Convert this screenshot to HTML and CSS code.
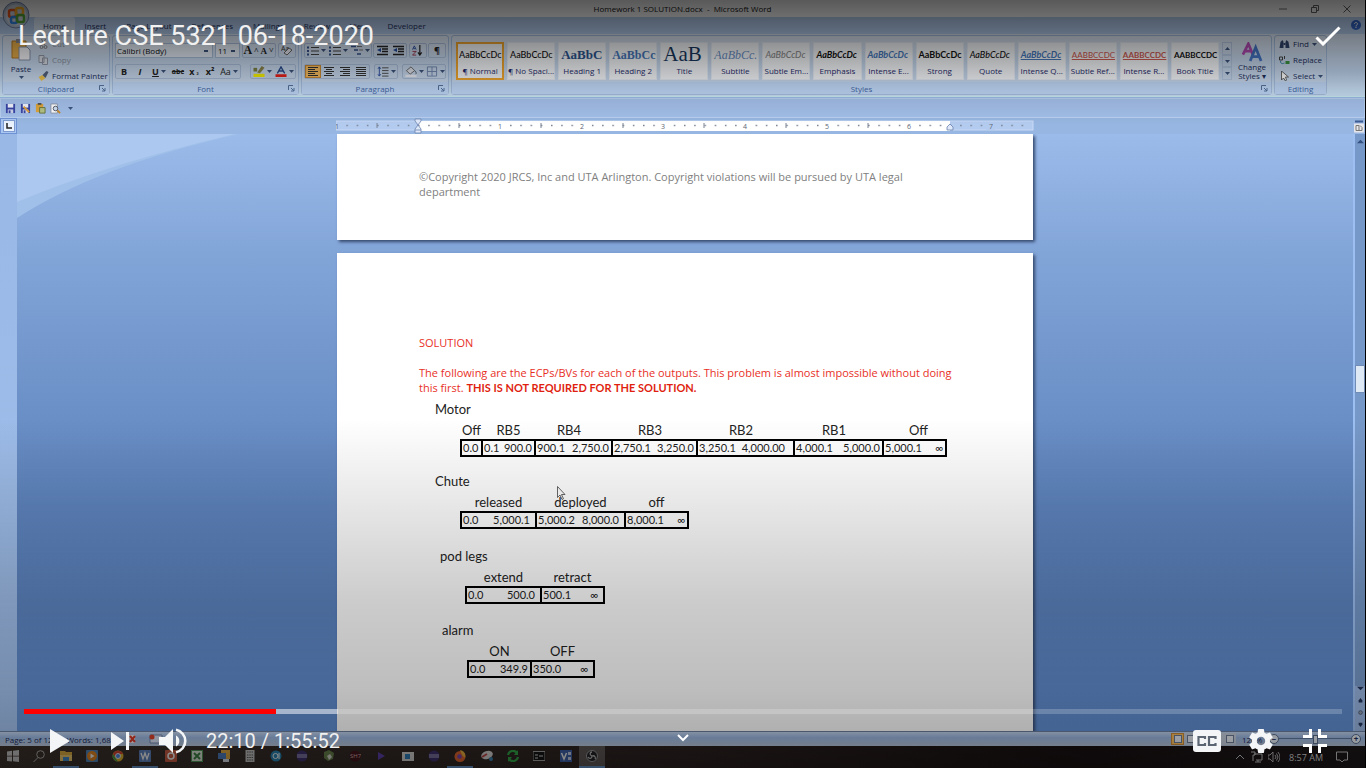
FILE: index.html
```html
<!DOCTYPE html>
<html lang="en">
<head>
<meta charset="utf-8">
<meta name="viewport" content="width=device-width, initial-scale=1">
<title>Lecture CSE 5321 06-18-2020</title>
<link rel="stylesheet" href="styles.css">
</head>
<body>
<svg class="defs" aria-hidden="true">
  <symbol id="down" viewBox="0 0 5 3"><path d="M0 0h5L2.500 3z" fill="#3d5680"/></symbol>
  <symbol id="launch" viewBox="0 0 7 7"><path d="M.5 5V.5H5M3 3l3 3M6 3v3H3" fill="none" stroke="#54729c"/></symbol>
  <symbol id="bullets" viewBox="0 0 12 10"><path d="M0 1h2v2H0zM0 4.500h2v2H0zM0 8h2v2H0z" fill="#35528b"/><path d="M4 2h8M4 5.500h8M4 9h8" stroke="#444"/></symbol>
  <symbol id="indent" viewBox="0 0 12 10"><path d="M1 1h11M6 3.500h6M6 6h6M1 9h11" stroke="#222" stroke-width="1.400"/><path d="M5 2.500v4L1 4.500z" fill="#234b9a"/></symbol>
  <symbol id="lines" viewBox="0 0 12 10"><path d="M1 1h10M1 3h7M1 5h10M1 7h7M1 9h10" stroke="#333" stroke-width="1.200"/></symbol>
  <symbol id="linesc" viewBox="0 0 12 10"><path d="M1 1h10M3 3h6M1 5h10M3 7h6M1 9h10" stroke="#333" stroke-width="1.200"/></symbol>
  <symbol id="linesr" viewBox="0 0 12 10"><path d="M1 1h10M4 3h7M1 5h10M4 7h7M1 9h10" stroke="#333" stroke-width="1.200"/></symbol>
  <symbol id="linesj" viewBox="0 0 12 10"><path d="M1 1h10M1 3h10M1 5h10M1 7h10M1 9h10" stroke="#333" stroke-width="1.200"/></symbol>
  <symbol id="save" viewBox="0 0 12 12"><path d="M1 1h10v10H1z" fill="#3a46a8"/><path d="M3 1h6v4H3z" fill="#f2f4ff"/><path d="M3 7h6v4H3z" fill="#cdd3ea"/><path d="M4 8h2v3H4z" fill="#3a46a8"/></symbol>
  <symbol id="eclipse" viewBox="0 0 12 12"><circle cx="6" cy="6" r="5.500" fill="#3b2f70"/><path d="M1 5h10M1 7h10" stroke="#b9b4d8" stroke-width="1.200"/></symbol>
</svg>

<div class="player">
  <div class="word">
    <header class="titlebar">
      <svg class="office" viewBox="0 0 28 28" aria-hidden="true"><circle cx="14" cy="14" r="13" fill="#b9c6da" stroke="#7084a8"/><circle cx="14" cy="14" r="10.500" fill="#d5deeb"/><rect x="7" y="9" width="7" height="7" rx="2" fill="none" stroke="#f05a1c" stroke-width="2.500"/><rect x="14" y="7" width="7" height="7" rx="2" fill="none" stroke="#ffb020" stroke-width="2.500"/><rect x="9" y="16" width="6" height="6" rx="2" fill="none" stroke="#3287e8" stroke-width="2.500"/><rect x="15" y="14" width="7" height="7" rx="2" fill="none" stroke="#55a637" stroke-width="2.500"/></svg>
      <span class="doc-name">Homework 1 SOLUTION.docx&nbsp; - &nbsp;Microsoft Word</span>
      <div class="window-buttons">
        <button aria-label="Minimize"><svg viewBox="0 0 8 8"><path d="M0 4h8" stroke="#777"/></svg></button>
        <button aria-label="Restore"><svg viewBox="0 0 8 8"><path d="M.5 2.500h5v5h-5zM2.500 2V.5h5v5H6" fill="none" stroke="#666"/></svg></button>
        <button aria-label="Close"><svg viewBox="0 0 8 8"><path d="M.5.5l7 7M7.500.5l-7 7" stroke="#666"/></svg></button>
      </div>
    </header>

    <nav class="tabs">
      <button class="tab tab-active">Home</button>
      <button class="tab">Insert</button>
      <button class="tab">Page Layout</button>
      <button class="tab">References</button>
      <button class="tab">Mailings</button>
      <button class="tab">Review</button>
      <button class="tab">View</button>
      <button class="tab">Developer</button>
      <svg class="help" viewBox="0 0 10 10" aria-hidden="true"><circle cx="5" cy="5" r="5" fill="#3467c8"/><path d="M3.500 4c0-2 3-2 3 0 0 1-1.500 1-1.500 2v.5M5 7v1" fill="none" stroke="#fff"/></svg>
    </nav>

    <div class="ribbon">
      <section class="group g-clip">
        <div class="group-body clip">
          <button class="paste"><svg viewBox="0 0 20 22"><path d="M1 2h14v17H1z" fill="#edb24b" stroke="#b97d22"/><path d="M5 0h6v4H5z" fill="#8a8a92"/><path d="M8 8h8l3 3v10H8z" fill="#fbfbff" stroke="#8694ad"/></svg>Paste<svg class="down"><use href="#down"/></svg></button>
          <div class="stack">
            <button class="off"><svg viewBox="0 0 10 10"><path d="M3 0l3 6M7 0L4 6" stroke="#888"/><circle cx="3" cy="8" r="1.500" fill="none" stroke="#888"/><circle cx="7" cy="8" r="1.500" fill="none" stroke="#888"/></svg>Cut</button>
            <button class="off"><svg viewBox="0 0 10 10"><path d="M.5.5h5v7h-5zM4 3h5v6.500H4z" fill="#dce0e8" stroke="#9199a8"/></svg>Copy</button>
            <button><svg viewBox="0 0 10 10"><path d="M0 6l4-2 3 3-4 3z" fill="#f1c54c"/><path d="M4 4l4-4 2 1-3 6z" fill="#53607c"/></svg>Format Painter</button>
          </div>
        </div>
        <h2>Clipboard<svg class="launch"><use href="#launch"/></svg></h2>
      </section>

      <section class="group g-font">
        <div class="group-body rows">
          <div class="row">
            <select class="font-name" aria-label="Font"><option>Calibri (Body)</option></select>
            <select class="font-size" aria-label="Font size"><option>11</option></select>
            <span class="box"><button class="t16 serif big" aria-label="Grow font">A<sup>˄</sup></button><button class="t16 serif" aria-label="Shrink font">A<sup>˅</sup></button></span>
            <span class="box"><button class="t16" aria-label="Clear formatting"><svg class="ic" viewBox="0 0 12 11"><text x="0" y="6" font-size="7" fill="#333">Aa</text><path d="M3 8l5-5 3 2-5 5z" fill="#e9eaf2" stroke="#666"/></svg></button></span>
          </div>
          <div class="row">
            <span class="box">
              <button class="t16 b">B</button><button class="t16 i">I</button><button class="t24 b"><u>U</u><svg class="down"><use href="#down"/></svg></button><button class="t16 strike">abc</button><button class="t16 b">x<sub>₂</sub></button><button class="t16 b">x²</button><button class="t24">Aa<svg class="down"><use href="#down"/></svg></button>
            </span>
            <span class="box"><button class="t24" aria-label="Highlight"><svg class="ic" viewBox="0 0 12 12"><path d="M0 8.500h12V12H0z" fill="#f5f000"/><path d="M4 7l5-7 3 2-5 6z" fill="#8a8448"/><path d="M0 2h4v4H0z" fill="#7c8040"/></svg><svg class="down"><use href="#down"/></svg></button><button class="t24" aria-label="Font color"><svg class="ic" viewBox="0 0 12 12"><path d="M0 9h12v3H0z" fill="#e8201a"/><path d="M2 8l4-7 4 7M4 5.500h4" fill="none" stroke="#274a8c" stroke-width="1.500"/></svg><svg class="down"><use href="#down"/></svg></button></span>
          </div>
        </div>
        <h2>Font<svg class="launch"><use href="#launch"/></svg></h2>
      </section>

      <section class="group g-para">
        <div class="group-body rows">
          <div class="row">
            <span class="box"><button class="t24" aria-label="Bullets"><svg class="ic"><use href="#bullets"/></svg><svg class="down"><use href="#down"/></svg></button><button class="t24" aria-label="Numbering"><svg class="ic"><use href="#bullets"/></svg><svg class="down"><use href="#down"/></svg></button><button class="t24" aria-label="Multilevel list"><svg class="ic" viewBox="0 0 12 10"><path d="M0 1h5M3 4.500h4M6 8.500h4" stroke="#35528b" stroke-width="1.500"/><path d="M6 1h5M8 4.500h4" stroke="#777"/></svg><svg class="down"><use href="#down"/></svg></button></span>
            <span class="box"><button class="t16" aria-label="Decrease indent"><svg class="ic"><use href="#indent"/></svg></button><button class="t16" aria-label="Increase indent"><svg class="ic"><use href="#indent"/></svg></button></span>
            <span class="box"><button class="t16" aria-label="Sort"><svg class="ic" viewBox="0 0 12 12"><path d="M0 5l2-4 2 4M1 4h2" fill="none" stroke="#2a4da0"/><path d="M0 7h4L0 11h4" fill="none" stroke="#9a3048"/><path d="M8 0v10M6 8l2 3 2-3" fill="none" stroke="#222" stroke-width="1.300"/></svg></button></span>
            <span class="box"><button class="t16 b">¶</button></span>
          </div>
          <div class="row">
            <span class="box"><button class="t16 pressed" aria-label="Align left"><svg class="ic"><use href="#lines"/></svg></button><button class="t16" aria-label="Center"><svg class="ic"><use href="#linesc"/></svg></button><button class="t16" aria-label="Align right"><svg class="ic"><use href="#linesr"/></svg></button><button class="t16" aria-label="Justify"><svg class="ic"><use href="#linesj"/></svg></button></span>
            <span class="box"><button class="t24" aria-label="Line spacing"><svg class="ic" viewBox="0 0 12 12"><path d="M2 1v10M.5 3L2 1l1.500 2M.5 9L2 11l1.500-2" fill="none" stroke="#2a4da0"/><path d="M5 2h7M5 5h7M5 8h7M5 11h7" stroke="#444"/></svg><svg class="down"><use href="#down"/></svg></button></span>
            <span class="box"><button class="t24" aria-label="Shading"><svg class="ic" viewBox="0 0 12 12"><path d="M1 5l5-4 4 4-5 4z" fill="#dfe3ec" stroke="#666"/><path d="M10 5c2 2 2 3 1 4" fill="none" stroke="#456"/><path d="M0 9.500h12V12H0z" fill="#eef2fa"/></svg><svg class="down"><use href="#down"/></svg></button><button class="t20" aria-label="Borders"><svg class="ic" viewBox="0 0 12 12"><path d="M1 1h10v10H1zM6 1v10M1 6h10" fill="none" stroke="#6f86ae"/></svg><svg class="down"><use href="#down"/></svg></button></span>
          </div>
        </div>
        <h2>Paragraph<svg class="launch"><use href="#launch"/></svg></h2>
      </section>

      <section class="group g-styles">
        <div class="group-body styles">
          <div class="gallery">
            <button class="style selected"><span>AaBbCcDc</span>¶ Normal</button>
            <button class="style"><span>AaBbCcDc</span>¶ No Spaci...</button>
            <button class="style"><span class="s-h1">AaBbC</span>Heading 1</button>
            <button class="style"><span class="s-h2">AaBbCc</span>Heading 2</button>
            <button class="style"><span class="s-title">AaB</span>Title</button>
            <button class="style"><span class="s-sub">AaBbCc.</span>Subtitle</button>
            <button class="style"><span class="s-soft">AaBbCcDc</span>Subtle Em...</button>
            <button class="style"><span class="s-em">AaBbCcDc</span>Emphasis</button>
            <button class="style"><span class="s-int">AaBbCcDc</span>Intense E...</button>
            <button class="style"><span class="s-strong">AaBbCcDc</span>Strong</button>
            <button class="style"><span class="s-quote">AaBbCcDc</span>Quote</button>
            <button class="style"><span class="s-iq">AaBbCcDc</span>Intense Q...</button>
            <button class="style"><span class="s-ref">AaBbCcDc</span>Subtle Ref...</button>
            <button class="style"><span class="s-ref s-refb">AaBbCcDc</span>Intense R...</button>
            <button class="style"><span class="s-book">AaBbCcDc</span>Book Title</button>
          </div>
          <div class="gallery-nav">
            <button aria-label="Previous styles"><svg class="down flip"><use href="#down"/></svg></button>
            <button aria-label="Next styles"><svg class="down"><use href="#down"/></svg></button>
            <button aria-label="More styles"><svg class="down"><use href="#down"/></svg></button>
          </div>
          <button class="change"><svg viewBox="0 0 22 22"><path d="M1 14L7 2l5 12M3 10h7" fill="none" stroke="#b44cb4" stroke-width="3"/><path d="M9 21l6-15 6 15M11 16h8" fill="none" stroke="#4577c8" stroke-width="3"/></svg>Change<br>Styles ▾</button>
        </div>
        <h2>Styles<svg class="launch"><use href="#launch"/></svg></h2>
      </section>

      <section class="group g-edit">
        <div class="group-body stack">
          <button><svg viewBox="0 0 10 10"><path d="M0 9l1-6 2-2 1 2v6zM6 9V3l1-2 2 2 1 6z" fill="#31466e"/><path d="M4 4h2v2H4z" fill="#31466e"/></svg>Find<svg class="down"><use href="#down"/></svg></button>
          <button><svg viewBox="0 0 10 10"><path d="M0 2h3v3H0zM5 1v3" fill="none" stroke="#444"/><path d="M1 6c0 3 2 3 4 2" fill="none" stroke="#38a"/><path d="M6 6h4v3H6z" fill="#3a9440"/></svg>Replace</button>
          <button><svg viewBox="0 0 10 10"><path d="M2 0v9l2-2 2 3 1-1-1-3h3z" fill="#fff" stroke="#444" stroke-width=".8"/></svg>Select<svg class="down"><use href="#down"/></svg></button>
        </div>
        <h2>Editing</h2>
      </section>
    </div>

    <div class="quick">
      <button aria-label="Save"><svg><use href="#save"/></svg></button>
      <button aria-label="Save as"><svg viewBox="0 0 12 12"><use href="#save"/><path d="M4 4l6 6" stroke="#e2a13a" stroke-width="2"/></svg></button>
      <button aria-label="Paste"><svg viewBox="0 0 12 12"><path d="M1 1h8v9H1z" fill="#dda53b"/><path d="M3 0h4v2H3z" fill="#555"/><path d="M5 5h6v6H5z" fill="#b6c486" stroke="#68743b"/></svg></button>
      <button aria-label="Print preview"><svg viewBox="0 0 12 12"><path d="M1 1h7v10H1z" fill="#fff" stroke="#8c96a8"/><circle cx="6" cy="6" r="2.500" fill="#cfe2f5" stroke="#556"/><path d="M8 8l3 3" stroke="#c98a28" stroke-width="2"/></svg></button>
      <button aria-label="Customize"><svg class="down"><use href="#down"/></svg></button>
    </div>

    <div class="ruler-row">
      <button class="corner" aria-label="Tab selector"><svg viewBox="0 0 12 12"><rect x=".5" y=".5" width="11" height="11" fill="#eaf2fd" stroke="#7e9bcf"/><path d="M4 3v5h5" fill="none" stroke="#222" stroke-width="1.500"/></svg></button>
      <svg class="ruler" viewBox="0 0 698 16" role="img" aria-label="Ruler">
        <defs><pattern id="ticks" x="82" y="0" width="10.230" height="16" patternUnits="userSpaceOnUse"><path d="M0 7.500h1.500" stroke="#7a8494" stroke-width="1.500"/></pattern></defs>
        <rect x="0" y="3" width="697" height="9" fill="#b4cbf0" stroke="#c8daf6"/>
        <rect x="82" y="3" width="532" height="10" fill="#fff"/>
        <rect x="5" y="3" width="690" height="10" fill="url(#ticks)"/>
        <g fill="#fff"><path d="M158 4h10v8h-10zM240 4h10v8h-10zM322 4h10v8h-10zM403 4h10v8h-10zM485 4h10v8h-10zM567 4h10v8h-10z"/></g>
        <path d="M650 4h9v8h-9z" fill="#b4cbf0"/>
        <path d="M41 5v5M123 5v5M205 5v5M287 5v5M368 5v5M450 5v5M532 5v5" stroke="#7a8494"/>
        <g class="ruler-num"><text x="1" y="11">1</text><text x="164" y="11">1</text><text x="246" y="11">2</text><text x="327" y="11">3</text><text x="409" y="11">4</text><text x="491" y="11">5</text><text x="573" y="11">6</text><text x="655" y="11">7</text></g>
        <path d="M79 1h6v2l-3 4-3-4zM79 11l3-4 3 4v4h-6zM79 12h6M611 12V9l3-3 3 3v3z" fill="#dfe9fa" stroke="#6b83ae" stroke-width=".8"/>
      </svg>
      <span class="ruler-end"><svg viewBox="0 0 10 12"><path d="M1 0h8v2H1z" fill="#3e5d94"/><path d="M0 3h10v9H0z" fill="#e6e6ea"/><path d="M2 5h3v5H2zM6 5l2 2v3H5" fill="none" stroke="#777"/></svg></span>
    </div>

    <main class="workspace">
      <div class="gutter"></div>
      <div class="canvas">
        <svg class="wave" viewBox="0 0 222 84" aria-hidden="true"><path d="M0 0h222Q80 32 0 84z" fill="#a1c0e9"/><path d="M0 0h218Q90 30 0 68z" fill="#acc8f0"/></svg>
        <article class="page page-end">
          <p>©Copyright 2020 JRCS, Inc and UTA Arlington. Copyright violations will be pursued by UTA legal<br>department</p>
        </article>
        <article class="page page-next">
          <p class="red">SOLUTION</p>
          <p class="red">The following are the ECPs/BVs for each of the outputs. This problem is almost impossible without doing<br>this first. <b>THIS IS NOT REQUIRED FOR THE SOLUTION.</b></p>
          <table class="ranges motor">
            <caption>Motor</caption>
            <colgroup><col class="w21"><col class="w53"><col class="w77"><col class="w85"><col class="w97"><col class="w89"><col class="w63"></colgroup>
            <thead><tr><th>Off</th><th>RB5</th><th>RB4</th><th>RB3</th><th>RB2</th><th>RB1</th><th>Off</th></tr></thead>
            <tbody><tr><td><div><span>0.0</span></div></td><td><div><span>0.1</span><span>900.0</span></div></td><td><div><span>900.1</span><span>2,750.0</span></div></td><td><div><span>2,750.1</span><span>3,250.0</span></div></td><td><div class="wide"><span>3,250.1</span><span>4,000.00</span></div></td><td><div><span>4,000.1</span><span>5,000.0</span></div></td><td><div><span>5,000.1</span><span>∞</span></div></td></tr></tbody>
          </table>
          <table class="ranges chute">
            <caption>Chute</caption>
            <colgroup><col class="w75"><col class="w89"><col class="w63"></colgroup>
            <thead><tr><th>released</th><th>deployed</th><th>off</th></tr></thead>
            <tbody><tr><td><div class="in"><span>0.0</span><span>5,000.1</span></div></td><td><div class="in"><span>5,000.2</span><span>8,000.0</span></div></td><td><div><span>8,000.1</span><span>∞</span></div></td></tr></tbody>
          </table>
          <table class="ranges legs">
            <caption>pod legs</caption>
            <colgroup><col class="w75"><col class="w63"></colgroup>
            <thead><tr><th>extend</th><th>retract</th></tr></thead>
            <tbody><tr><td><div class="in"><span>0.0</span><span>500.0</span></div></td><td><div class="in"><span>500.1</span><span>∞</span></div></td></tr></tbody>
          </table>
          <table class="ranges alarm">
            <caption>alarm</caption>
            <colgroup><col class="w63"><col class="w63"></colgroup>
            <thead><tr><th>ON</th><th>OFF</th></tr></thead>
            <tbody><tr><td><div><span>0.0</span><span>349.9</span></div></td><td><div class="in"><span>350.0</span><span>∞</span></div></td></tr></tbody>
          </table>
          <svg class="cursor" viewBox="0 0 9 14" aria-hidden="true"><path d="M.5.5v11l2.500-2.500 2 4.500 1.500-.7-2-4.300H8z" fill="#fff" stroke="#444" stroke-width=".8"/></svg>
        </article>
      </div>
      <div class="scrollbar">
        <svg viewBox="0 0 8 4"><path d="M0 4l4-4 4 4z" fill="#33507f"/></svg>
        <span class="before"></span><span class="thumb"></span><span class="after"></span>
        <div class="scroll-end">
          <svg viewBox="0 0 8 4"><path d="M0 0h8L4 4z" fill="#22355c"/></svg>
          <svg viewBox="0 0 8 8"><path d="M1 4l3-4 3 4v3H1z" fill="#22355c"/></svg>
          <svg viewBox="0 0 8 8"><circle cx="4" cy="4" r="3" fill="#8d98aa" stroke="#33445f"/></svg>
          <svg viewBox="0 0 8 8"><path d="M1 4l3 4 3-4V1H1z" fill="#22355c"/></svg>
        </div>
      </div>
    </main>

    <footer class="status">
      <span class="pages">Page: 5 of 12</span><span class="words">Words: 1,681</span>
      <svg class="proof" viewBox="0 0 36 10" aria-hidden="true"><path d="M0 1h8v8H0z" fill="#e8e8f0"/><path d="M3 2l5 6M8 2L3 8" stroke="#d83828" stroke-width="2"/><path d="M23 1h12v8H23z" fill="#d5dff2" stroke="#6e82a8"/><circle cx="25" cy="3" r="2.500" fill="#d8402a"/></svg>
      <div class="views"><button class="pressed" aria-label="Print layout"><i></i></button><button aria-label="Reading"><i></i></button><button aria-label="Web"><i></i></button><button aria-label="Outline"><i></i></button><button aria-label="Draft"><i></i></button></div>
      <span class="zoom-value">120%</span>
      <button class="round" aria-label="Zoom out">−</button>
      <input class="zoom" type="range" aria-label="Zoom" value="50">
      <button class="round" aria-label="Zoom in">+</button>
    </footer>

    <div class="taskbar">
      <div class="apps">
        <button aria-label="Start"><svg viewBox="0 0 12 12"><path d="M0 1.500l5-.7v5H0zM6 .7L12 0v5.800H6zM0 6.500h5v5L0 11zM6 6.500h6V12l-6-.7z" fill="#c8c8c8"/></svg></button>
        <button aria-label="Search"><svg viewBox="0 0 12 12"><circle cx="7.500" cy="4.500" r="3.800" fill="none" stroke="#b0b0b0"/><path d="M5 7.500L.5 12" stroke="#b0b0b0"/></svg></button>
        <button class="open" aria-label="Files"><svg viewBox="0 0 12 12"><path d="M0 1h5l1 1h6v9H0z" fill="#e0b03c"/><path d="M0 5h12v6H0z" fill="#f2cf6c"/><path d="M3 7h6v4H3z" fill="#3c8bd0"/></svg></button>
        <button aria-label="Media"><svg viewBox="0 0 12 12"><rect width="12" height="12" rx="1" fill="#4b86c0"/><circle cx="6" cy="6" r="5" fill="#e8871e"/><path d="M4.500 3.500v5l4-2.500z" fill="#fff"/></svg></button>
        <button aria-label="Chrome"><svg viewBox="0 0 12 12"><circle cx="6" cy="6" r="5.500" fill="#e2b52c"/><path d="M1 4A5.500 5.500 0 0111 4H6L4 8z" fill="#d8402f"/><path d="M1 4l3 5 2 2.500A5.500 5.500 0 011 4z" fill="#3a9a4a"/><circle cx="6" cy="6" r="2.500" fill="#4a86e8" stroke="#eee"/></svg></button>
        <button class="open" aria-label="Word"><svg viewBox="0 0 12 12"><rect width="12" height="12" rx="1" fill="#5b84c4"/><path d="M2 3l2 6 2-6 2 6 2-6" fill="none" stroke="#fff" stroke-width="1.300"/></svg></button>
        <button aria-label="PowerPoint"><svg viewBox="0 0 12 12"><rect width="12" height="12" rx="1" fill="#cc5a40"/><circle cx="6" cy="6" r="3" fill="none" stroke="#fff" stroke-width="1.500"/></svg></button>
        <button aria-label="Excel"><svg viewBox="0 0 12 12"><rect x=".5" y=".5" width="11" height="11" fill="#e2efe0" stroke="#4c9b57"/><path d="M3 3l6 6M9 3L3 9" stroke="#388343" stroke-width="2"/></svg></button>
        <button aria-label="Outlook"><svg viewBox="0 0 12 12"><path d="M3 0h9v9H3z" fill="#e6ad3b"/><path d="M0 3h8v6H0z" fill="#4b7ec4"/><path d="M5 9h6v3H5z" fill="#d9e2ef"/></svg></button>
        <button aria-label="Calculator"><svg viewBox="0 0 12 12"><path d="M1.500 0h9v12h-9z" fill="#c9c9c9"/><path d="M3 2h6M3 5h6M3 7.500h6M3 10h6" stroke="#555" stroke-dasharray="1.500 .8"/></svg></button>
        <button aria-label="Player"><svg viewBox="0 0 12 12"><circle cx="6" cy="6" r="5.500" fill="#2387b8"/><circle cx="5.500" cy="6" r="2.500" fill="none" stroke="#fff"/><path d="M9 3v6" stroke="#fff"/></svg></button>
        <button aria-label="Eclipse"><svg><use href="#eclipse"/></svg></button>
        <button aria-label="Notepad"><svg viewBox="0 0 12 12"><path d="M1 2l5-2 5 3-1 6-5 2-4-3z" fill="#69854c"/><path d="M4 6l3-2 2 3-3 3z" fill="#dbe0d4"/></svg></button>
        <button aria-label="SH7"><svg viewBox="0 0 12 12"><circle cx="6" cy="6" r="5.500" fill="#401018"/><text x="1" y="8" font-size="6" fill="#d8b0b0">SH7</text></svg></button>
        <button aria-label="Run"><svg viewBox="0 0 12 12"><path d="M3 2l7 4-7 4z" fill="#5b3fb0"/></svg></button>
        <button aria-label="Panel"><svg viewBox="0 0 12 12"><path d="M0 2h12v9H0z" fill="#dadada"/><path d="M3 4h5v5H3z" fill="#2a7fc0"/></svg></button>
        <button aria-label="Eclipse workspace"><svg><use href="#eclipse"/></svg></button>
        <button class="open" aria-label="Firefox"><svg viewBox="0 0 12 12"><circle cx="6" cy="6.500" r="5.500" fill="#e8672c"/><path d="M6 0c5 1 6 5 5 8L8 5z" fill="#f5b73a"/><circle cx="5.500" cy="6.500" r="2.300" fill="#7a46b8"/></svg></button>
        <button aria-label="Snip"><svg viewBox="0 0 12 12"><ellipse cx="6" cy="5" rx="6" ry="4" transform="rotate(-20 6 5)" fill="#e0dcdc"/><path d="M1 7l5-3" stroke="#c24545" stroke-width="2"/><circle cx="10" cy="9" r="2" fill="#3a86b8"/></svg></button>
        <button aria-label="Sync"><svg viewBox="0 0 12 12"><path d="M1 5a5 5 0 019-2M11 7a5 5 0 01-9 2" fill="none" stroke="#2fae48" stroke-width="2.200"/><path d="M11 0v5H7zM1 12V7h4z" fill="#2fae48"/></svg></button>
        <button aria-label="Terminal"><svg viewBox="0 0 12 12"><path d="M0 1.500h12v9H0z" fill="#111" stroke="#aaa"/><path d="M2 5h3M6 6h4M2 8h3" stroke="#ddd"/></svg></button>
        <button aria-label="Visio"><svg viewBox="0 0 12 12"><path d="M0 0h12v12H0z" fill="#3c63b0"/><path d="M1.500 3L4 9l2.500-6" fill="none" stroke="#fff" stroke-width="1.500"/><path d="M8 2h3v3H8zM8 7h3v3H8z" fill="#c9d6f2"/></svg></button>
        <button class="open focus" aria-label="OBS"><svg viewBox="0 0 12 12"><circle cx="6" cy="6" r="5.500" fill="#17171b" stroke="#999"/><path d="M6 6C3 5 4 2 6 2M6 6c3-1 4 2 3 3M6 6c0 3-3 3-4 1" fill="none" stroke="#bbb" stroke-width="1.300"/></svg></button>
      </div>
      <div class="tray">
        <svg viewBox="0 0 12 12"><path d="M2 8l4-4 4 4" fill="none" stroke="#bbb"/></svg>
        <svg viewBox="0 0 12 12"><path d="M3 3h8v6H5M7 9v2M4 11h6M0 1h4v3H2v6" fill="none" stroke="#bbb"/></svg>
        <svg viewBox="0 0 12 12"><path d="M0 4h2l3-3v10L2 8H0zM7 4q2 2 0 4M8.500 2.500q3 3.500 0 7M10 1q4 5 0 10" fill="none" stroke="#bbb" stroke-width=".9"/></svg>
        <time>8:57 AM</time>
        <svg viewBox="0 0 12 12"><path d="M.5 1h11v8H8l-2 2-2-2H.5z" fill="none" stroke="#bbb"/></svg>
      </div>
    </div>
  </div>

  <div class="overlay">
    <div class="overlay-top">
      <h1>Lecture CSE 5321 06-18-2020</h1>
      <button aria-label="Done"><svg class="check" viewBox="0 0 26 20"><path d="M1.500 11.500l6.500 6.500L24.500 1.500" fill="none" stroke="#fff" stroke-width="3"/></svg></button>
    </div>
    <div class="overlay-bottom">
      <input class="seek" type="range" aria-label="Seek" min="0" max="6952" value="1330">
      <div class="controls">
        <div class="left">
          <button class="c60" aria-label="Play"><svg viewBox="0 0 24 24"><path d="M2 0l20 12L2 24z" fill="#f4f5f7"/></svg></button>
          <button class="c60" aria-label="Next"><svg viewBox="0 0 24 24"><path d="M3 3l13 9-13 9zM18 3h3v18h-3z" fill="#f4f5f7"/></svg></button>
          <button class="c46" aria-label="Mute"><svg class="vol" viewBox="0 0 28 26"><path d="M0 9h6l8-8v24l-8-8H0z" fill="#f4f5f7"/><path d="M17 7.500a6.200 6.200 0 010 11z" fill="#f4f5f7"/><path d="M17 1.800a11.400 11.400 0 010 22.400" fill="none" stroke="#f4f5f7" stroke-width="2.600"/></svg></button>
          <span class="clock">22:10 / 1:55:52</span>
        </div>
        <button class="more" aria-label="More"><svg viewBox="0 0 12 8"><path d="M1 1l5 5 5-5" fill="none" stroke="#fff" stroke-width="2"/></svg></button>
        <div class="right">
          <button class="c54" aria-label="Captions"><svg class="cc" viewBox="0 0 28 22"><rect width="28" height="22" rx="3" fill="#f4f5f7"/><path d="M12 9V7H5.500v8H12v-2M22.500 9V7H16v8h6.500v-2" fill="none" stroke="#5c6673" stroke-width="2.200"/></svg></button>
          <button class="c54" aria-label="Settings"><svg viewBox="2 2 20 20"><path fill="#f4f5f7" d="M19.430 12.980c.04-.32.07-.64.07-.98s-.03-.66-.07-.98l2.110-1.650c.19-.15.24-.42.12-.64l-2-3.460c-.12-.22-.39-.3-.61-.22l-2.490 1c-.52-.4-1.080-.73-1.690-.98l-.38-2.650C14.460 2.180 14.250 2 14 2h-4c-.25 0-.46.18-.49.42l-.38 2.650c-.61.25-1.170.59-1.690.98l-2.490-1c-.23-.09-.49 0-.61.22l-2 3.460c-.13.22-.07.49.12.64l2.110 1.650c-.04.32-.07.65-.07.98s.03.66.07.98l-2.110 1.650c-.19.15-.24.42-.12.64l2 3.460c.12.22.39.3.61.22l2.490-1c.52.4 1.080.73 1.690.98l.38 2.650c.03.24.24.42.49.42h4c.25 0 .46-.18.49-.42l.38-2.650c.61-.25 1.170-.59 1.690-.98l2.490 1c.23.09.49 0 .61-.22l2-3.460c.12-.22.07-.49-.12-.64l-2.110-1.650zM12 15.500c-1.930 0-3.500-1.570-3.500-3.500s1.570-3.500 3.500-3.500 3.500 1.570 3.500 3.500-1.570 3.500-3.500 3.500z"/></svg></button>
          <button class="c54" aria-label="Exit full screen"><svg viewBox="0 0 24 24"><path d="M0 7.500h7.500V0M16.500 0v7.500H24M0 16.500h7.500V24M24 16.500h-7.500V24" fill="none" stroke="#fff" stroke-width="3"/></svg></button>
        </div>
      </div>
    </div>
  </div>
</div>
</body>
</html>
```
FILE: styles.css
```css
* { box-sizing: border-box; }
body { margin: 0; background: #000; font-family: "Open Sans", "Noto Sans", sans-serif; }
button, input, select { margin: 0; padding: 0; border: 0; background: none; color: inherit; font: inherit; }
h1, h2, p { margin: 0; font-weight: 400; }
.defs { display: none; }
.player { position: relative; height: 100vh; overflow: hidden; }
.word { isolation: isolate; display: flex; flex-direction: column; height: 100%; border-right: 1px solid #000; background: #9dbde9; font-size: 8px; font-weight: 500; color: #1e2f5c; }

/* Title bar and tabs */
.titlebar { position: relative; flex: none; display: grid; grid-template-columns: 1fr auto 1fr; align-items: center; height: 17px; background: #fff; color: #111; }
.doc-name { grid-column: 2; }
.office { position: absolute; left: 2px; top: 1px; width: 28px; height: 28px; z-index: 1; }
.window-buttons { display: flex; justify-content: flex-end; gap: 24px; padding-right: 14px; }
.window-buttons button { display: flex; }
.window-buttons svg { width: 8px; height: 8px; }
.tabs { flex: none; display: flex; align-items: stretch; height: 17px; padding: 0 4px 0 34px; background: #b7d0f2; }
.tab { padding: 0 10px; }
.tab-active { padding: 0 9px; border-radius: 3px 3px 0 0; background: #dce9f9; }
.help { width: 10px; height: 10px; margin: 3px 0 0 auto; }

/* Ribbon */
.ribbon { flex: none; display: flex; gap: 2px; height: 63px; padding: 1px 38px 1px 2px; border-bottom: 1px solid #c9ecf3; background: linear-gradient(#dbe7f6, #bfd4ee 60%, #c9e0f5); }
.group { display: flex; flex-direction: column; min-width: 0; border: 1px solid #a6bfe0; border-radius: 3px; background: linear-gradient(#dfe8f4, #c6d8ee 40%, #cbdcf2); }
.group-body { flex: 1; min-height: 0; }
.group h2 { position: relative; flex: none; height: 12px; background: #bfd7f7; color: #3f67a6; font-size: 8px; line-height: 14px; text-align: center; }
.g-clip { width: 108px; }
.g-font { width: 187px; }
.g-para { width: 148px; }
.g-styles { flex: 1; }
.g-edit { width: 53px; }
.launch { position: absolute; right: 3px; top: 3px; width: 7px; height: 7px; }
.down { width: 5px; height: 3px; flex: none; }
.flip { transform: rotate(180deg); }
.clip { display: flex; gap: 2px; padding-left: 5px; }
.paste { display: flex; flex-direction: column; align-items: center; gap: 1px; width: 26px; padding-top: 2px; line-height: 12px; }
.paste > svg:first-child { width: 20px; height: 24px; }
.stack { display: flex; flex-direction: column; padding-left: 2px; }
.stack button { display: flex; align-items: center; gap: 3px; line-height: 16px; white-space: nowrap; }
.stack button > svg:first-child { width: 11px; height: 10px; }
.off { color: #8b93a2; }
.g-edit .stack { padding-left: 4px; }
.rows { display: flex; flex-direction: column; gap: 6px; padding: 7px 2px 0; }
.row { display: flex; justify-content: space-between; height: 15px; }
.box { display: flex; align-items: center; border: 1px solid #a9bedb; border-radius: 2px; }
.box button { display: flex; align-items: center; justify-content: center; gap: 2px; height: 13px; color: #222; font-size: 9px; }
.t16 { width: 16px; }
.t20 { width: 20px; }
.t24 { width: 22px; }
.ic { width: 12px; height: 11px; }
.b { font-weight: 700; }
.i { font-style: italic; font-weight: 700; }
.box .strike { font-size: 7px; font-weight: 700; text-decoration: line-through; }
.serif { font-family: "Liberation Serif", serif; font-weight: 700; }
.box .big { font-size: 12px; }
.serif sup { font-size: 8px; }
.box sub { font-size: 6px; }
.pressed { border: 1px solid #c98a35; background: #f8bd5f; }
.font-name, .font-size { appearance: none; height: 15px; border: 1px solid #a9bedb; background: #e6eef9 linear-gradient(#3d5680, #3d5680) right 4px center / 4px 2px no-repeat; color: #111; }
.font-name { width: 98px; padding-left: 1px; }
.font-size { width: 25px; padding-left: 2px; }
.styles { display: flex; gap: 3px; padding: 6px 2px 2px 4px; }
.gallery { flex: 1; min-width: 0; display: grid; grid-template-columns: repeat(15, minmax(0, 1fr)); gap: 3px; }
.style { display: flex; flex-direction: column; align-items: center; min-width: 0; overflow: hidden; border: 1px solid #e6edf7; background: #f6f8fb; color: #1f2a6b; line-height: 12px; white-space: nowrap; }
.style span { width: 100%; height: 22px; overflow: hidden; padding-left: 2px; color: #111; font: 500 9px/24px Lato, sans-serif; text-align: left; }
.selected { border: 2px solid #f0a52e; }
.selected span { height: 21px; padding-left: 1px; line-height: 22px; }
.style .s-h1, .style .s-h2 { color: #2b5590; font: 700 13px/24px "Liberation Serif", serif; }
.style .s-h2 { color: #4679bb; font-size: 12px; }
.style .s-title { color: #17365d; font: 21px/22px "Liberation Serif", serif; }
.style .s-sub { color: #6a8fc4; font: italic 12px/24px "Liberation Serif", serif; }
.style .s-soft { color: #8a8a8a; font-style: italic; }
.style .s-em, .style .s-quote { font-style: italic; }
.style .s-em { font-weight: 700; }
.style .s-int { color: #4679bb; font-style: italic; font-weight: 700; }
.style .s-strong { font-weight: 700; }
.style .s-iq { color: #4679bb; font-style: italic; font-weight: 700; text-decoration: underline; }
.style .s-ref { color: #cf5b52; font-size: 8px; text-transform: uppercase; text-decoration: underline; }
.style .s-refb { font-weight: 700; }
.style .s-book { font-size: 8px; font-weight: 700; text-transform: uppercase; }
.gallery-nav { display: flex; flex-direction: column; width: 10px; }
.gallery-nav button { flex: 1; display: flex; align-items: center; justify-content: center; border: 1px solid #b5c8e3; }
.change { width: 34px; line-height: 9px; }
.change svg { display: block; width: 22px; height: 20px; margin: 0 auto; }

/* Quick access and ruler */
.quick { flex: none; display: flex; align-items: center; gap: 3px; height: 20px; margin-top: 1px; padding-left: 3px; border: 1px solid #b9d0f2; background: #a4c0ea; }
.quick button { display: flex; justify-content: center; width: 12px; }
.quick button svg:not(.down) { width: 11px; height: 11px; }
.ruler-row { flex: none; display: grid; grid-template-columns: 17px 1fr 12px; justify-items: center; align-items: center; height: 16px; background: #97b6e1; }
.corner { display: flex; align-items: center; justify-content: center; width: 17px; height: 16px; border: 1px solid #6f92d4; background: #a9c6f2; }
.corner svg { width: 12px; height: 12px; }
.ruler { width: 698px; height: 16px; }
.ruler-num { fill: #5c6673; font-size: 7px; text-anchor: middle; }
.ruler-end { display: flex; }
.ruler-end svg { width: 10px; height: 13px; }

/* Document */
.workspace { flex: 1; min-height: 0; display: flex; }
.gutter { width: 17px; background: linear-gradient(#99b8e5, #a0bfeb); }
.canvas { position: relative; flex: 1; min-width: 0; display: flex; flex-direction: column; align-items: center; gap: 13px; overflow: hidden; background: linear-gradient(#9bbbea, #82a5d8 20%, #6c91c8 45%, #5e84be 63%, #5d85c2 80%, #6290d4); }
.wave { position: absolute; left: 0; top: 0; width: 222px; height: 84px; }
.page { position: relative; flex: none; width: 696px; padding: 0 82px; background: #fff; box-shadow: 2px 2px 3px #34496e; color: #808080; font: 11px/15px "Open Sans", sans-serif; white-space: nowrap; }
.page-end { height: 106px; padding-top: 35px; }
.page-next { flex: 1; min-height: 478px; padding-top: 82px; }
.red { margin-bottom: 15px; color: #e8301f; }
.red b { color: #e01f10; font-family: Lato, sans-serif; }
.red + .red { margin-bottom: 6px; }
.ranges { table-layout: fixed; border-collapse: collapse; margin: 0 0 18px 41px; color: #222; font-family: Lato, sans-serif; font-size: 11px; }
.ranges caption { width: 80px; margin-left: -25px; padding-bottom: 6px; font-size: 13px; line-height: 16px; text-align: left; }
.ranges th { height: 17px; padding: 0; font-size: 13px; font-weight: 400; line-height: 15px; vertical-align: top; }
.ranges td { height: 16px; padding: 0; border: 2px solid #000; line-height: 12px; }
.ranges td div { display: flex; justify-content: space-between; padding: 0 2px 0 1px; }
.ranges td .in { padding-right: 5px; }
.ranges td .wide { padding-right: 8px; }
.motor { width: 485px; margin-bottom: 16px; }
.motor th:nth-child(n+3) { padding-right: 9px; }
.motor th:last-child { padding: 0 0 0 8px; }
.chute { width: 227px; margin-bottom: 19px; }
.legs { width: 138px; margin-left: 46px; }
.alarm { width: 126px; margin-left: 48px; }
.w21 { width: 21px; }
.w53 { width: 53px; }
.w63 { width: 63px; }
.w75 { width: 75px; }
.w77 { width: 77px; }
.w85 { width: 85px; }
.w89 { width: 89px; }
.w97 { width: 97px; }
.cursor { position: absolute; left: 220px; top: 233px; width: 9px; height: 14px; }
.scrollbar { display: flex; flex-direction: column; align-items: center; width: 12px; padding-top: 5px; border-left: 2px solid #9cbef0; background: #7698c8; }
.scrollbar svg { width: 7px; height: 5px; }
.before { flex: 43; }
.after { flex: 57; }
.thumb { width: 10px; height: 28px; border: 1px solid #718cb4; background: #dfe8f5; }
.scroll-end { display: flex; flex-direction: column; align-items: center; gap: 7px; width: 100%; padding-bottom: 4px; background: #98b4df; }

/* Status bar */
.status { flex: none; display: flex; align-items: center; height: 15px; padding: 0 4px 0 5px; border-top: 1px solid #6c7f9e; background: linear-gradient(#c1d3ee, #9bb8e2 40%, #b4c2d8); color: #1c2b55; }
.words { margin-left: 14px; }
.proof { width: 36px; height: 10px; margin-left: 12px; }
.views { display: flex; margin-left: auto; background: #c5cfdd; }
.views button { display: flex; align-items: center; justify-content: center; width: 13px; height: 12px; }
.views i { width: 8px; height: 8px; border: 1px solid #6b7c96; background: #e8edf5; }
.zoom-value { width: 27px; margin-left: 6px; }
.round { width: 10px; height: 10px; border: 1px solid #596b88; border-radius: 50%; background: #e4ebf5; line-height: 8px; font-weight: 700; }
.zoom { appearance: none; width: 72px; height: 10px; background: linear-gradient(transparent 4px, #61779d 4px 5px, transparent 5px); }
.zoom::-webkit-slider-thumb { appearance: none; width: 5px; height: 9px; background: #e4ebf5; border: 1px solid #596b88; }

/* Taskbar */
.taskbar { flex: none; display: flex; justify-content: space-between; height: 22px; background: linear-gradient(90deg, #362e28, #28201e 50%, #170f10 80%, #1c1719); }
.apps { display: grid; grid-template-columns: repeat(23, 1fr); width: 605px; }
.apps button { display: flex; align-items: center; justify-content: center; border-bottom: 2px solid transparent; }
.apps svg { width: 12px; height: 12px; opacity: .85; }
.apps .open { border-bottom-color: #5c86b5; }
.apps .focus { background: #55504e; }
.tray { display: flex; align-items: center; gap: 5px; padding-right: 17px; color: #ccc; font-size: 9px; }
.tray svg { width: 12px; height: 12px; }
.tray time { margin: 0 8px 0 4px; }

/* Player controls */
.overlay { position: absolute; inset: 0; display: flex; flex-direction: column; justify-content: space-between; color: #f1f1f1; font-family: Roboto, sans-serif;
  background:
    linear-gradient(rgba(0, 0, 0, .65), rgba(0, 0, 0, .57) 17px, rgba(0, 0, 0, .47) 34px, rgba(0, 0, 0, .3) 60px, rgba(0, 0, 0, .12) 90px, transparent 125px),
    linear-gradient(to top, rgba(0, 0, 0, .42), rgba(0, 0, 0, .31) 37px, rgba(0, 0, 0, .26) 78px, rgba(0, 0, 0, .2) 168px, rgba(0, 0, 0, .09) 268px, transparent 350px); }
.overlay button { display: flex; align-items: center; justify-content: center; }
.overlay-top { display: flex; align-items: center; justify-content: space-between; padding: 20px 25px 0 18px; }
.overlay h1 { font-size: 27px; line-height: 32px; }
.check { width: 26px; height: 20px; }
.overlay-bottom { padding: 0 24px 11px; }
.seek { display: block; appearance: none; width: 100%; height: 5px; margin-bottom: 11px; background: linear-gradient(90deg, #f00 19.1%, rgba(255, 255, 255, .52) 19.1% 23.8%, rgba(255, 255, 255, .2) 23.8%); }
.seek::-webkit-slider-thumb { appearance: none; width: 1px; height: 1px; }
.controls { display: grid; grid-template-columns: 1fr auto 1fr; align-items: center; height: 32px; }
.left, .right { display: flex; align-items: center; }
.left { padding-left: 6px; }
.right { justify-content: flex-end; }
.controls svg { width: 24px; height: 24px; }
.controls .vol { width: 28px; height: 26px; }
.controls .cc { width: 28px; height: 22px; }
.controls .more svg { width: 12px; height: 8px; }
.more { padding-bottom: 6px; }
.c46 { width: 46px; }
.c54 { width: 54px; }
.c60 { width: 60px; }
.clock { padding-left: 10px; font-size: 20px; line-height: 24px; }
```
